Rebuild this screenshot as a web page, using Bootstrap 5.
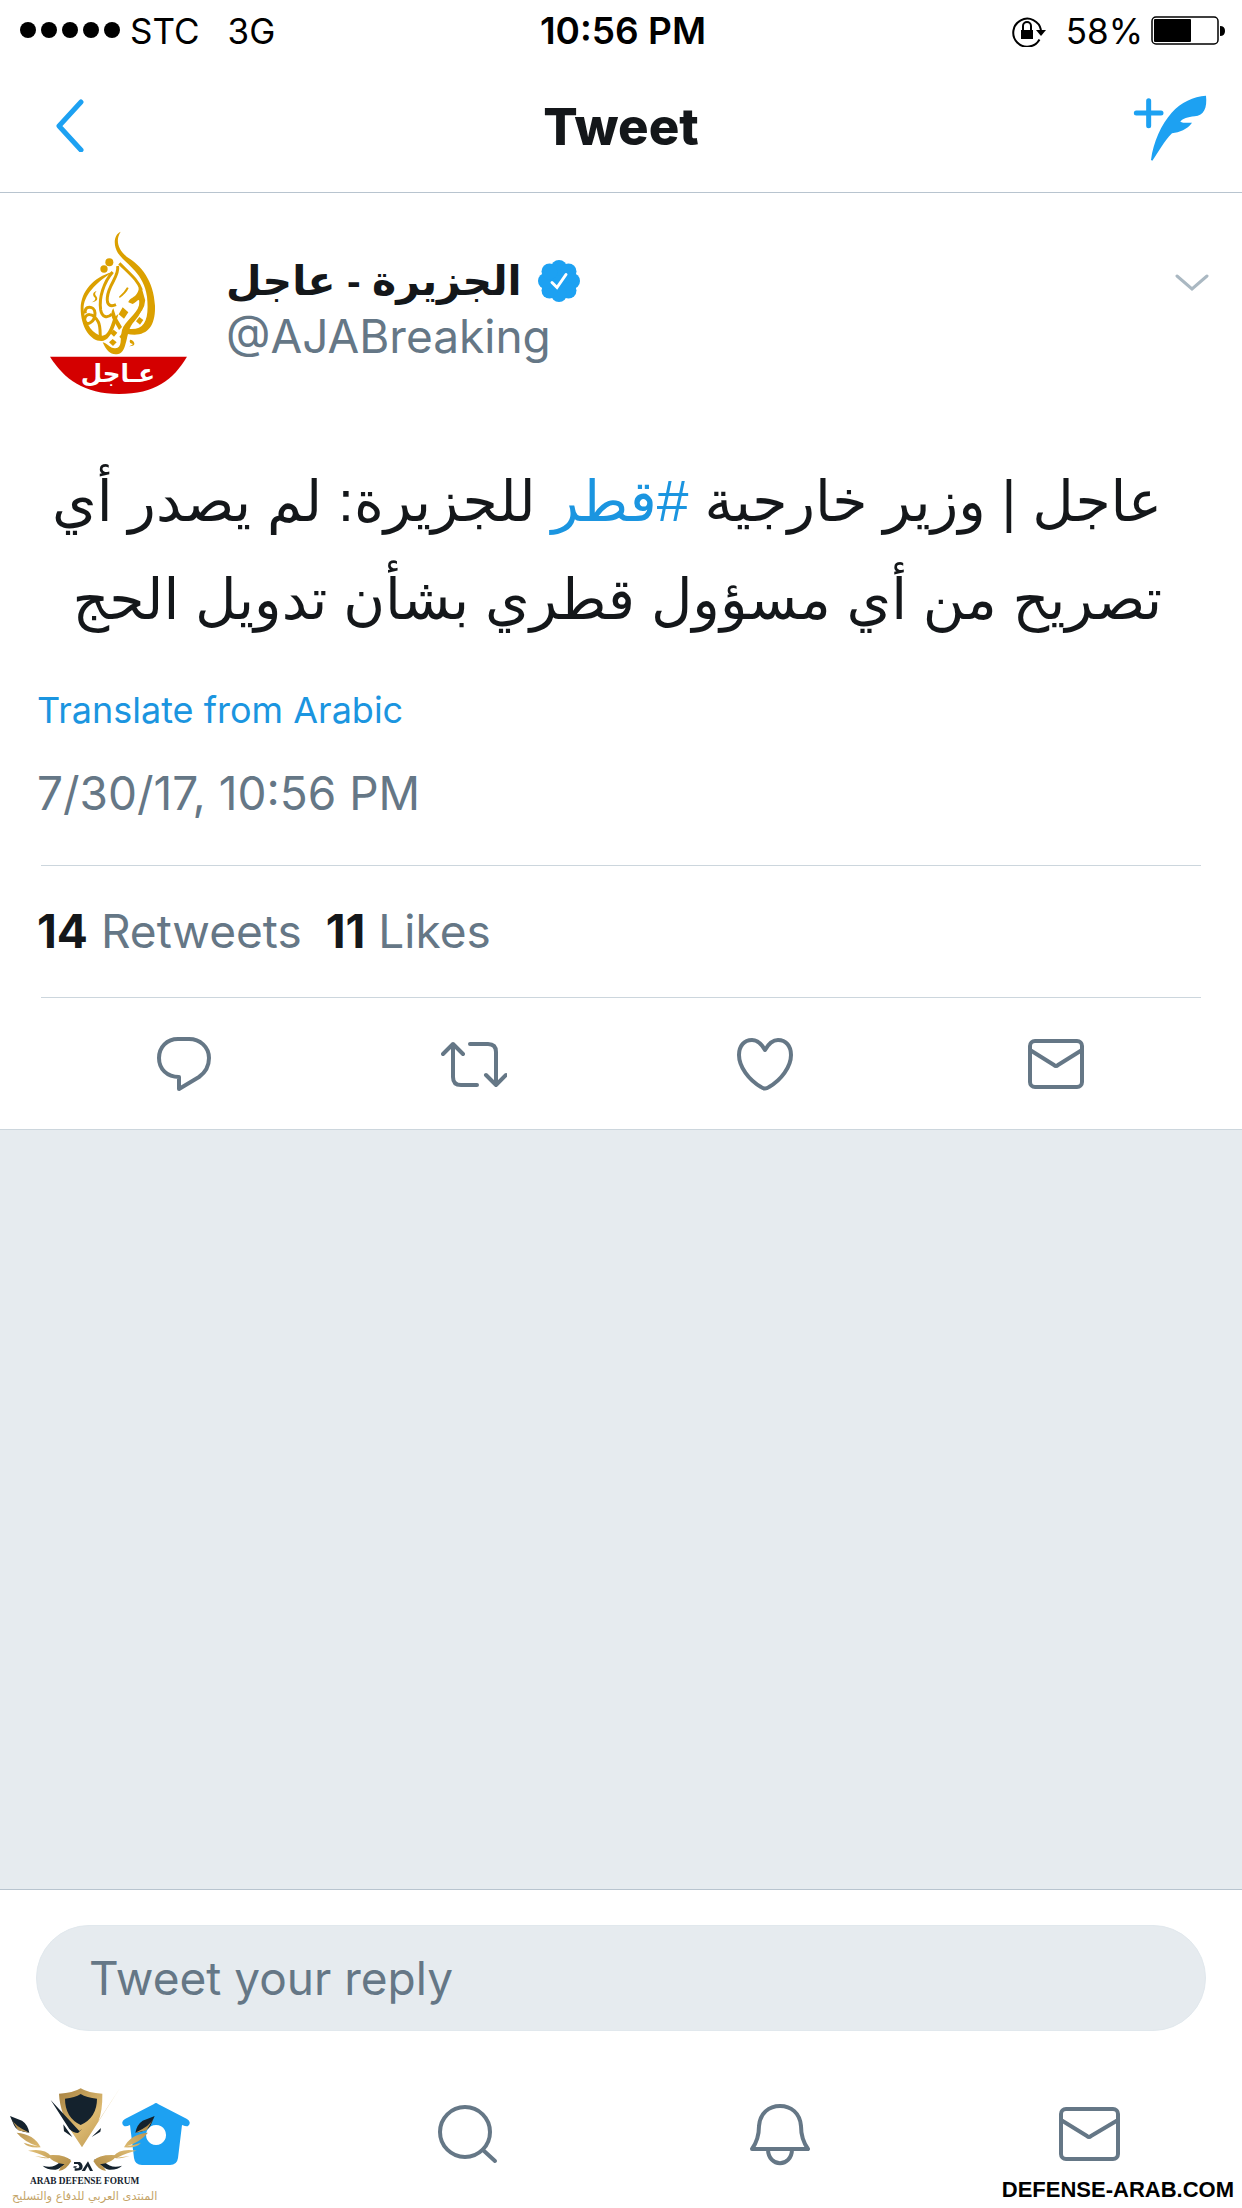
<!DOCTYPE html>
<html lang="en">
<head>
<meta charset="utf-8">
<meta name="viewport" content="width=device-width, initial-scale=1">
<title>Tweet</title>
<link href="https://cdn.jsdelivr.net/npm/bootstrap@5.3.0/dist/css/bootstrap.min.css" rel="stylesheet">
<style>
  body { font-family: Inter, "DejaVu Sans", sans-serif; color: #14171a; background: #e6ebef; }
  svg { display: block; flex: none; }
  .status-bar { height: 62px; padding: 0 16px 0 20px; font-size: 35px; line-height: 40px; color: #000; }
  .clock { font-size: 37px; }
  .side { flex: 1 1 0; }
  .top-bar { height: 131px; padding: 0 36px; border-bottom: 1px solid #b8c4cf; }
  .top-bar h1 { font-size: 51px; line-height: 58px; font-weight: 800; }
  .plain { border: 0; padding: 0; background: none; color: inherit; }
  .blue { color: #1da1f2; }
  .tweet { border-bottom: 1px solid #ccd6dd; }
  .author { padding: 37px 32px 0 36px; gap: 26px; }
  .author-text { padding-top: 26px; }
  .author-name { font: 700 41px/50px "Liberation Sans", "DejaVu Sans", sans-serif; }
  .name-row { gap: 16px; }
  .more { padding-top: 44px; }
  .muted { color: #657786; }
  .body-lg { font-size: 46px; line-height: 60px; }
  .tweet-text { font: 400 57px/98px "Liberation Sans", "DejaVu Sans", sans-serif; padding: 0 80px 0 36px; margin: 58px 0 0; }
  .tweet-text a, .translate { color: #1b95e0; text-decoration: none; }
  .details { padding: 40px 41px 0 37px; }
  .translate { font-size: 36px; line-height: 44px; }
  .date { padding: 31px 0 42px; }
  .rule { border-top: 1px solid #ccd6dd; margin-left: 4px; }
  .counts a { color: inherit; text-decoration: none; }
  .counts { gap: 24px; padding: 35px 0 36px; }
  .counts b { color: #14171a; font-weight: 700; }
  .actions { height: 131px; color: #657786; }
  .reply-wrap { border-top: 1px solid #b8c4cf; padding: 35px 36px 29px; background: #fff; }
  .reply-box, .reply-box:focus { height: 106px; background: #e6ebef; border: 1px solid #e1e8ed; border-radius: 53px; padding: 0 52px; font-size: 46px; color: #14171a; }
  .reply-box::placeholder { color: #657786; opacity: 1; }
  .tabs { height: 148px; background: #fff; color: #657786; }
  .forum-logo { left: 8px; bottom: 0; }
  .site-mark { right: 8px; bottom: 4px; font: 700 22px/28px "Liberation Sans", sans-serif; color: #000; }
</style>
<script src="https://cdn.jsdelivr.net/npm/bootstrap@5.3.0/dist/js/bootstrap.bundle.min.js"></script>
</head>
<body>
<div class="d-flex flex-column min-vh-100">
  <header class="bg-white">
    <div class="status-bar d-flex align-items-center">
      <div class="side d-flex align-items-center">
        <svg width="110" height="18" viewBox="0 0 110 18"><circle cx="8" cy="8" r="8"/><circle cx="29" cy="8" r="8"/><circle cx="50" cy="8" r="8"/><circle cx="71" cy="8" r="8"/><circle cx="92" cy="8" r="8"/></svg>
        <span>STC</span><span class="ms-4 ps-1">3G</span>
      </div>
      <span class="clock fw-semibold">10:56 PM</span>
      <div class="side d-flex align-items-center justify-content-end">
        <svg class="me-3" width="38" height="32" viewBox="0 0 38 32"><path d="M27.500 24.500A14 14 0 1 1 29 15" fill="none" stroke="#000" stroke-width="2"/><path d="M24 15h10l-5 6z"/><rect x="9" y="15" width="12" height="9"/><path d="M11 16v-5a4 4 0 0 1 8 0v5" fill="none" stroke="#000" stroke-width="2"/></svg>
        <span class="me-2">58%</span>
        <svg width="75" height="30" viewBox="0 0 75 30"><rect x="1" y="1" width="66" height="27" rx="4" fill="none" stroke="#000" stroke-width="1.5"/><rect x="3" y="3" width="37" height="23" rx="1"/><path d="M69 10q5 0 5 5t-5 5z"/></svg>
      </div>
    </div>
    <nav class="top-bar d-flex align-items-center">
      <div class="side"><button class="plain blue ms-3" type="button" aria-label="Back"><svg width="36" height="56" viewBox="0 0 36 56"><path d="M29 6 7 30 29 54" fill="none" stroke="currentColor" stroke-width="5" stroke-linecap="round" stroke-linejoin="round"/></svg></button></div>
      <h1 class="m-0">Tweet</h1>
      <div class="side d-flex justify-content-end"><button class="plain blue" type="button" aria-label="Compose"><svg width="72" height="66" viewBox="522 284 216 198" overflow="visible" fill="currentColor"><path d="M529 341H603M566 304V379" stroke="currentColor" stroke-width="15" stroke-linecap="round"/><path d="M738 289C742 325 732 349 704 351C683 353 668 358 661 367C670 372 684 370 696 370C681 391 659 398 636 402C612 426 598 455 577 484L573 482C580 428 604 375 635 340C663 308 700 292 738 289Z"/></svg></button></div>
    </nav>
  </header>

  <main class="tweet bg-white">
    <div class="author d-flex">
      <svg width="164" height="164" viewBox="18 60 492 492" role="img" aria-label="Al Jazeera">
        <g fill="#dba000">
          <path d="M272 65C251 74 249 106 264 130C291 165 342 190 351 260C358 329 345 363 292 356L289 371C348 384 377 353 375 287C372 212 333 165 290 140C265 119 255 92 272 65Z"/>
          <circle cx="238" cy="157" r="12"/><circle cx="222" cy="177" r="11"/>
          <path d="M247 186C190 202 153 244 152 294C152 355 184 395 216 393C242 390 255 350 265 312L250 325C240 358 231 378 216 377C190 374 166 344 161 300C158 255 202 216 247 186Z"/>
          <path d="M218 397C230 425 245 437 265 432C293 424 286 371 307 341C324 323 340 300 342 270L327 232C323 266 300 260 295 277L308 282C320 278 331 255 327 286C320 314 284 334 276 360C269 391 278 412 256 415C240 416 232 399 218 397Z"/>
          <path d="M250 295C242 307 242 320 252 334L267 360L276 351L258 320Z"/>
          <path d="M278 292L295 307L282 326L266 313ZM328 321L340 330L330 344L318 334ZM251 359L262 368L252 380L241 370ZM277 370L288 379L277 390L268 380ZM248 387L260 397L249 408L237 397Z"/>
          <path d="M267 260Q282 248 291 232L296 234Q289 250 269 264ZM300 389Q296 400 309 402Q306 406 297 409Q315 409 313 400Q310 389 300 389ZM200 243C187 246 187 258 195 263C198 270 190 275 184 277C205 275 204 264 198 258C193 252 196 247 200 243Z"/>
        </g>
        <g fill="none" stroke="#dba000">
          <path d="M268 160C300 192 324 210 334 240M263 168C268 200 236 222 232 262C230 284 240 292 258 284M330 232L341 271C339 310 302 320 292 353" stroke-width="9"/>
          <path d="M166 310C160 286 194 285 195 309C196 338 166 351 164 330C165 310 188 305 205 336C212 349 210 370 211 386" stroke-width="9"/>
          <path d="M248 186C222 216 206 262 212 300C216 322 232 326 246 312" stroke-width="9"/>
        </g>
        <path d="M60 440H471C429 510 375 551 267 552C162 551 103 508 60 440Z" fill="#d40000"/>
        <text x="264" y="516" text-anchor="middle" fill="#fff" font-family="DejaVu Sans" font-weight="700" font-size="74">عـاجل</text>
      </svg>
      <div class="author-text flex-grow-1">
        <div class="name-row d-flex align-items-center">
          <bdi class="author-name">الجزيرة - عاجل</bdi>
          <svg width="42" height="42" viewBox="0 0 42 42"><g fill="#1da1f2"><circle cx="21" cy="21" r="16"/><circle cx="21" cy="8" r="8"/><circle cx="30.500" cy="11.500" r="8"/><circle cx="34" cy="21" r="8"/><circle cx="30.500" cy="30.500" r="8"/><circle cx="21" cy="34" r="8"/><circle cx="11.500" cy="30.500" r="8"/><circle cx="8" cy="21" r="8"/><circle cx="11.500" cy="11.500" r="8"/></g><path d="M14 22.500l5 5 9-13" fill="none" stroke="#fff" stroke-width="3" stroke-linecap="round"/></svg>
        </div>
        <div class="muted body-lg">@AJABreaking</div>
      </div>
      <button class="plain more align-self-start" type="button" aria-label="More"><svg width="36" height="18" viewBox="0 0 36 18"><path d="M3 2l15 13L33 2" fill="none" stroke="#aab8c2" stroke-width="3" stroke-linecap="round"/></svg></button>
    </div>

    <p class="tweet-text" dir="rtl" lang="ar"><span>عاجل | وزير خارجية</span> <a href="#qatar">#قطر</a> <span>للجزيرة: لم يصدر أي تصريح من أي مسؤول قطري بشأن تدويل الحج</span></p>

    <div class="details">
      <a class="translate d-block" href="#translate">Translate from Arabic</a>
      <div class="muted body-lg date">7/30/17, 10:56 PM</div>
      <div class="rule"></div>
      <div class="counts muted body-lg d-flex"><a href="#retweets"><b>14</b> Retweets</a><a href="#likes"><b>11</b> Likes</a></div>
      <div class="rule"></div>
      <div class="actions d-flex align-items-center">
        <button class="plain side d-flex justify-content-center" type="button" aria-label="Reply"><svg width="66" height="66" viewBox="0 0 66 66" fill="none" stroke="currentColor" stroke-width="4" stroke-linejoin="round"><path d="M29 46V58L49 46C56 41 59 35 59 27C59 16 50 8 39 8H28C17 8 9 16 9 27C9 38 17 46 29 46Z"/></svg></button>
        <button class="plain side d-flex justify-content-center" type="button" aria-label="Retweet"><svg width="66" height="66" viewBox="0 0 66 66" fill="none" stroke="currentColor" stroke-width="4" stroke-linecap="round" stroke-linejoin="round"><path d="M2 23L12 13L22 23M12 13V46Q12 54 20 54H36M29 13H47Q55 13 55 21V54M45 44L55 54L65 44"/></svg></button>
        <button class="plain side d-flex justify-content-center" type="button" aria-label="Like"><svg width="66" height="66" viewBox="0 0 66 66" fill="none" stroke="currentColor" stroke-width="4" stroke-linejoin="round"><path d="M33 19C29 12 25 9 20 9C12 9 7 15 7 24C7 36 17 49 29 56Q33 59 37 56C49 49 59 36 59 24C59 15 54 9 46 9C41 9 37 12 33 19Z"/></svg></button>
        <button class="plain side d-flex justify-content-center" type="button" aria-label="Send"><svg width="66" height="66" viewBox="0 0 66 66" fill="none" stroke="currentColor" stroke-width="4" stroke-linejoin="round"><rect x="7" y="10" width="52" height="46" rx="5"/><path d="M7 19L31 34Q33 36 35 34L59 19"/></svg></button>
      </div>
    </div>
  </main>

  <div class="flex-grow-1"></div>

  <footer class="position-relative">
    <div class="reply-wrap">
      <input class="reply-box form-control" type="text" placeholder="Tweet your reply" aria-label="Tweet your reply">
    </div>
    <nav class="tabs d-flex align-items-center">
      <a class="side d-flex justify-content-center blue" href="#home" aria-label="Home"><svg width="72" height="72" viewBox="0 0 72 72"><path fill="currentColor" fill-rule="evenodd" d="M35 6Q37 4 39 6L68 21Q73 24 69 28Q68 29 63 27L59 60Q58 67 51 67H23Q16 67 15 60L11 27Q7 29 5 28Q1 24 6 21ZM37 27a10 10 0 1 0 .1 0Z"/></svg></a>
      <a class="side d-flex justify-content-center text-reset" href="#search" aria-label="Search"><svg width="72" height="72" viewBox="0 0 72 72" fill="none" stroke="currentColor" stroke-width="4" stroke-linecap="round"><circle cx="35" cy="34" r="25"/><path d="M53 52L65 63"/></svg></a>
      <a class="side d-flex justify-content-center text-reset" href="#notifications" aria-label="Notifications"><svg width="72" height="72" viewBox="0 0 72 72" fill="none" stroke="currentColor" stroke-width="4" stroke-linejoin="round"><path d="M12 51C17 44 19 36 19 28C20 15 29 8 40 8C51 8 60 15 61 28C61 36 63 44 68 51ZM28 51C28 70 52 70 52 51"/></svg></a>
      <a class="side d-flex justify-content-center text-reset" href="#messages" aria-label="Messages"><svg width="72" height="72" viewBox="0 0 72 72" fill="none" stroke="currentColor" stroke-width="4" stroke-linejoin="round"><rect x="10" y="11" width="57" height="50" rx="5"/><path d="M10 22L36 38Q38 40 40 38L67 22"/></svg></a>
    </nav>
    <svg class="forum-logo position-absolute" width="152" height="124" viewBox="24 72 456 372" role="img" aria-label="Arab Defense Forum">
      <defs><linearGradient id="gold" x1="0" x2="1" y1="0" y2="1"><stop offset="0" stop-color="#a58040"/><stop offset=".5" stop-color="#dcb970"/><stop offset="1" stop-color="#b18b45"/></linearGradient></defs>
      <path fill="url(#gold)" d="M177 101Q219 99 242 85Q265 99 307 101Q308 152 295 184L362 81L246 262L215 215L190 165Q178 130 177 101Z"/>
      <path fill="#14222d" d="M195 116Q225 113 242 102Q260 113 291 116Q291 172 242 195Q195 172 195 116ZM152 120L238 213L246 207L234 219Q220 219 208 207ZM190 193L217 231L192 214ZM303 204L275 231L301 215Z"/>
      <g id="wing"><path fill="#14222d" d="M30 168L66 182Q83 193 88 218Q50 216 42 196ZM128 317Q160 327 180 306L212 298Q185 326 167 329Q140 330 128 317Z"/><path fill="url(#gold)" d="M33 175Q44 199 88 218L54 211ZM50 218Q102 222 122 262Q83 265 71 248Q92 255 114 259Q72 245 50 218ZM84 272Q135 264 153 288Q153 302 105 288L143 293Q110 276 84 272ZM144 286Q195 282 214 303Q196 334 176 332Q181 320 194 313Q156 309 144 286Z"/></g>
      <use href="#wing" transform="translate(494 0) scale(-1 1)"/>
      <path fill="#14222d" d="M222 306H240Q252 314 246 328Q240 333 224 332V325L235 325Q242 319 233 312H222ZM264 304L279 333H270L263 319L255 333H245ZM221 319H231L228 323H220Z"/>
      <text x="254" y="371" text-anchor="middle" font-family="Liberation Serif" font-weight="700" font-size="28" fill="#14222d">ARAB DEFENSE FORUM</text>
      <text x="254" y="419" text-anchor="middle" font-family="DejaVu Sans" font-size="34" fill="#c4a468">المنتدى العربي للدفاع والتسليح</text>
    </svg>
    <div class="site-mark position-absolute">DEFENSE-ARAB.COM</div>
  </footer>
</div>
</body>
</html>
